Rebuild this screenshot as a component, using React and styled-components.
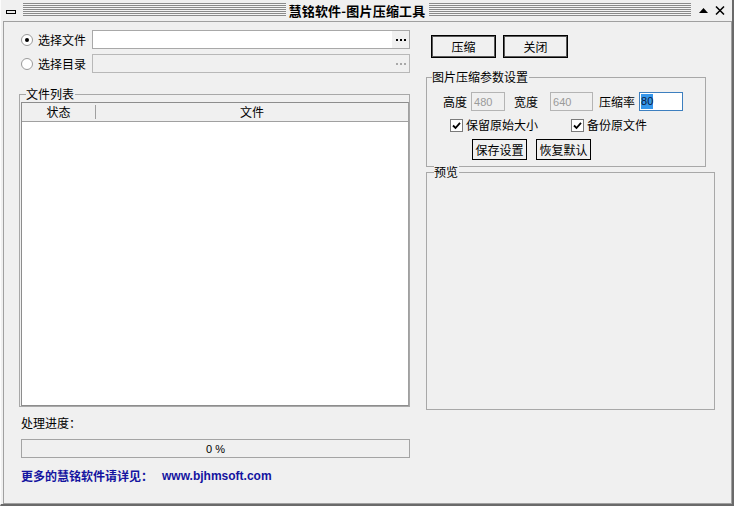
import React from 'react';
import styled, { createGlobalStyle } from 'styled-components';

const Global = createGlobalStyle`
html, body {
  margin: 0;
  padding: 0;
  background: #f0f0f0;
}
* {
  box-sizing: border-box;
}
`

const cjk = `"Noto Sans CJK SC", "Noto Sans", sans-serif`;

const Window = styled.div`
width: 734px;
height: 506px;
display: flex;
flex-direction: column;
background: #f0f0f0;
border-right: 2px solid #6a6a6a;
border-bottom: 2px solid #6a6a6a;
border-left: 1px solid #fcfcfc;
font-family: ${cjk};
font-size: 12px;
color: #000;
`

const TitleBar = styled.div`
height: 21px;
display: flex;
align-items: center;
padding: 0 6px 0 5px;
flex-shrink: 0;
`

const MinIcon = styled.div`
width: 10px;
height: 4px;
border: 1px solid #000;
background: #e8e8e8;
margin-right: 7px;
margin-top: 2px;
`

const Stripes = styled.div`
flex: 1;
height: 13px;
margin-top: -2px;
background: repeating-linear-gradient(to bottom, #8a8a8a 0 1px, #f4f4f4 1px 2px);
`

const Title = styled.div`
font-weight: 700;
font-size: 13px;
line-height: 16px;
padding: 0 3px 0 3px;
letter-spacing: 0.2px;
`

const CtrlBtn = styled.div`
width: 13px;
height: 13px;
display: flex;
align-items: center;
justify-content: center;
margin-left: ${props => props.gap || '0px'};
`

const Client = styled.div`
flex: 1;
display: flex;
gap: 16px;
margin-left: 2px;
border: 1px solid #a0a0a0;
padding: 8px 0 0 17px;
`

const LeftCol = styled.div`
width: 389px;
display: flex;
flex-direction: column;
`

const RightCol = styled.div`
width: 289px;
display: flex;
flex-direction: column;
`

const PickRow = styled.div`
display: flex;
align-items: center;
height: 19px;
margin-bottom: ${props => props.mb || '0px'};
`

const Radio = styled.span`
width: 12px;
height: 12px;
border-radius: 50%;
border: 1px solid #9a9a9a;
background: #fff;
display: flex;
align-items: center;
justify-content: center;
margin-right: 5px;
&::after {
  content: '';
  width: 4px;
  height: 4px;
  border-radius: 50%;
  background: ${props => props.checked ? '#000' : 'transparent'};
}
`

const Label = styled.span`
line-height: 14px;
white-space: nowrap;
width: ${props => props.w || 'auto'};
margin-left: ${props => props.ml || '0px'};
`

const PathBox = styled.div`
flex: 1;
height: 19px;
display: flex;
border: 1px solid ${props => props.disabled ? '#b8b8b8' : '#a8a8a8'};
background: ${props => props.disabled ? '#f0f0f0' : '#fff'};
`

const Dots = styled.div`
margin-left: auto;
width: 17px;
height: 100%;
background: #f0f0f0;
display: flex;
align-items: center;
justify-content: center;
gap: 2px;
& span {
  width: 2px;
  height: 2px;
  background: ${props => props.disabled ? '#a8a8a8' : '#000'};
}
`

const GroupBox = styled.div`
position: relative;
border: 1px solid #a8a8a8;
margin: ${props => props.m || '0'};
padding: ${props => props.pad || '0'};
width: ${props => props.w || 'auto'};
height: ${props => props.h || 'auto'};
`

const Legend = styled.span`
position: absolute;
top: -8px;
left: ${props => props.left || '6px'};
background: #f0f0f0;
line-height: 14px;
padding-right: 1px;
`

const ListView = styled.div`
height: 304px;
border: 1px solid #8d8d8d;
border-right-color: #a0a0a0;
background: #fff;
display: flex;
flex-direction: column;
`

const ListHead = styled.div`
height: 19px;
display: flex;
background: #f0f0f0;
border-bottom: 1px solid #a0a0a0;
`

const HeadCell = styled.div`
width: ${props => props.w || 'auto'};
flex: ${props => props.w ? 'none' : '1'};
display: flex;
align-items: center;
justify-content: center;
border-right: ${props => props.sep ? '1px solid #a0a0a0' : 'none'};
margin: 2px 0;
line-height: 14px;
`

const ProgressCaption = styled.div`
margin-top: 9px;
line-height: 14px;
`

const Progress = styled.div`
margin-top: 9px;
height: 19px;
border: 1px solid #a4a4a4;
background: #f0f0f0;
display: flex;
align-items: center;
justify-content: center;
font-family: "Liberation Sans", Arial, sans-serif;
font-size: 11px;
`

const Promo = styled.div`
margin-top: 11px;
display: flex;
align-items: center;
color: #1414a0;
font-weight: 700;
font-size: 12px;
line-height: 14px;
`

const Url = styled.span`
font-family: "Liberation Sans", Arial, sans-serif;
font-size: 12px;
margin-left: 9px;
`

const BtnRow = styled.div`
display: flex;
gap: ${props => props.gap || '8px'};
margin: ${props => props.m || '0'};
`

const Btn = styled.div`
width: ${props => props.w || '65px'};
height: ${props => props.h || '23px'};
border: 1px solid #000;
box-shadow: ${props => props.heavy ? 'inset 0 0 0 1px #5a5a5a' : 'none'};
background: #f0f0f0;
display: flex;
align-items: center;
justify-content: center;
line-height: 14px;
`

const ParamRow = styled.div`
display: flex;
align-items: center;
height: 19px;
`

const NumBox = styled.div`
width: ${props => props.w || '34px'};
height: 19px;
border: 1px solid ${props => props.active ? '#3d7fbf' : '#b4b4b4'};
background: ${props => props.active ? '#fff' : '#f0f0f0'};
color: ${props => props.active ? '#0c1a3c' : '#9a9a9a'};
font-family: "Liberation Sans", Arial, sans-serif;
font-size: 11px;
display: flex;
align-items: center;
padding-left: ${props => props.active ? '1px' : '2px'};
margin-left: ${props => props.ml || '0px'};
`

const Selected = styled.span`
background: #3596ea;
padding: 1px 0;
line-height: 13px;
`

const CheckRow = styled.div`
display: flex;
align-items: center;
height: 16px;
margin-top: 6px;
`

const Check = styled.span`
width: 13px;
height: 13px;
border: 1px solid #7a7a7a;
background: #fff;
display: flex;
align-items: center;
justify-content: center;
margin-left: ${props => props.ml || '0px'};
margin-right: 3px;
`

const CheckMark = () => (
  <svg width="9" height="9" viewBox="0 0 9 9">
    <path d="M1 4.5 L3.5 7 L8 1.8" fill="none" stroke="#000" strokeWidth="1.8" />
  </svg>
)

const App = () => {
  return <>
    <Global />
    <Window>
      <TitleBar>
        <MinIcon />
        <Stripes />
        <Title>慧铭软件-图片压缩工具</Title>
        <Stripes />
        <CtrlBtn gap="6px">
          <svg width="9" height="5" viewBox="0 0 9 5"><path d="M0 5 L4.5 0 L9 5 Z" fill="#000" /></svg>
        </CtrlBtn>
        <CtrlBtn gap="3px">
          <svg width="10" height="9" viewBox="0 0 10 9">
            <path d="M1 0.5 L9 8.5 M9 0.5 L1 8.5" stroke="#000" strokeWidth="1.5" />
          </svg>
        </CtrlBtn>
      </TitleBar>

      <Client>
        <LeftCol>
          <PickRow mb="5px">
            <Radio checked />
            <Label w="54px">选择文件</Label>
            <PathBox>
              <Dots><span /><span /><span /></Dots>
            </PathBox>
          </PickRow>
          <PickRow>
            <Radio />
            <Label w="54px">选择目录</Label>
            <PathBox disabled>
              <Dots disabled><span /><span /><span /></Dots>
            </PathBox>
          </PickRow>

          <GroupBox m="21px 0 0 -2px" pad="7px 0 0 1px">
            <Legend left="6px">文件列表</Legend>
            <ListView>
              <ListHead>
                <HeadCell w="74px" sep>状态</HeadCell>
                <HeadCell>文件</HeadCell>
              </ListHead>
            </ListView>
          </GroupBox>

          <ProgressCaption>处理进度：</ProgressCaption>
          <Progress>0 %</Progress>
          <Promo>
            更多的慧铭软件请详见：
            <Url>www.bjhmsoft.com</Url>
          </Promo>
        </LeftCol>

        <RightCol>
          <BtnRow gap="7px" m="5px 0 0 5px">
            <Btn heavy>压缩</Btn>
            <Btn heavy>关闭</Btn>
          </BtnRow>

          <GroupBox m="19px 0 0 0" w="280px" h="90px" pad="14px 0 0 16px">
            <Legend left="5px">图片压缩参数设置</Legend>
            <ParamRow>
              <Label>高度</Label>
              <NumBox ml="4px">480</NumBox>
              <Label ml="9px">宽度</Label>
              <NumBox ml="12px" w="43px">640</NumBox>
              <Label ml="6px">压缩率</Label>
              <NumBox ml="4px" w="44px" active><Selected>80</Selected></NumBox>
            </ParamRow>
            <CheckRow>
              <Check ml="7px"><CheckMark /></Check>
              <Label w="105px">保留原始大小</Label>
              <Check><CheckMark /></Check>
              <Label>备份原文件</Label>
            </CheckRow>
            <BtnRow gap="9px" m="6px 0 0 29px">
              <Btn w="55px" h="21px">保存设置</Btn>
              <Btn w="55px" h="21px">恢复默认</Btn>
            </BtnRow>
          </GroupBox>

          <GroupBox m="5px 0 0 0" w="289px" h="238px">
            <Legend left="7px">预览</Legend>
          </GroupBox>
        </RightCol>
      </Client>
    </Window>
  </>
}

export default App;
